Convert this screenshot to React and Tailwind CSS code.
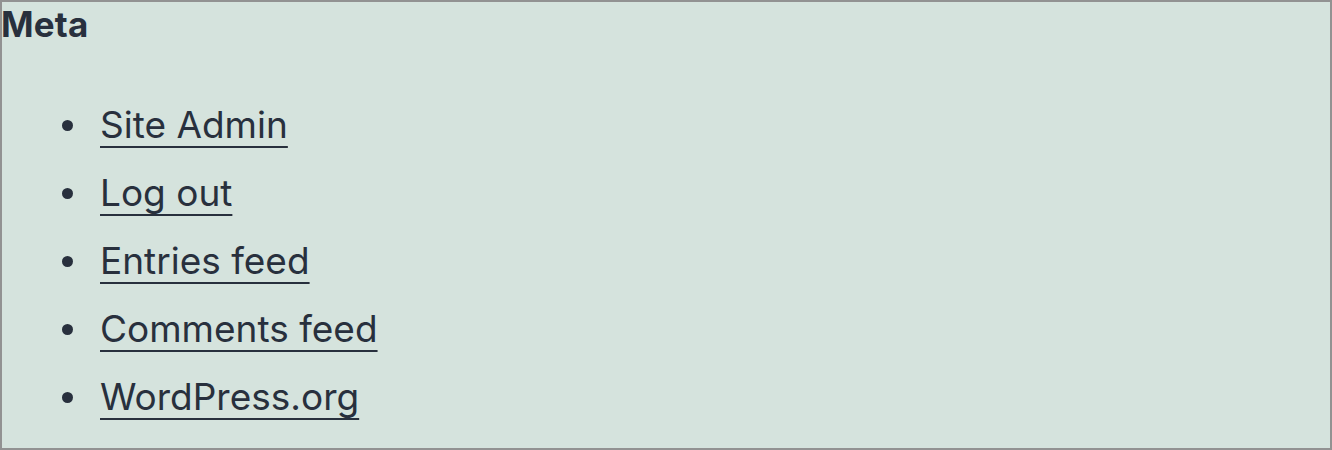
export default function App() {
  const items = ["Site Admin", "Log out", "Entries feed", "Comments feed", "WordPress.org"];
  return (
    <div className="w-[1332px] h-[450px] border-2 border-[#929292] bg-[#d5e3dd] text-[#28303d] overflow-hidden" style={{ fontFamily: "Inter, 'Noto Sans', sans-serif" }}>
      <h2 className="text-[35px] font-bold leading-[46px] -mt-[1px] -ml-[1px] tracking-[0.2px]">Meta</h2>
      <ul className="mt-[44px]">
        {items.map((t) => (
          <li key={t} className="flex items-center h-[68px] text-[37px]">
            <span className="ml-[60px] mr-[27px] w-[11px] h-[11px] rounded-full bg-[#28303d] shrink-0" />
            <a href="#" className="underline decoration-[2px] underline-offset-[8px] leading-[68px]">{t}</a>
          </li>
        ))}
      </ul>
    </div>
  );
}
